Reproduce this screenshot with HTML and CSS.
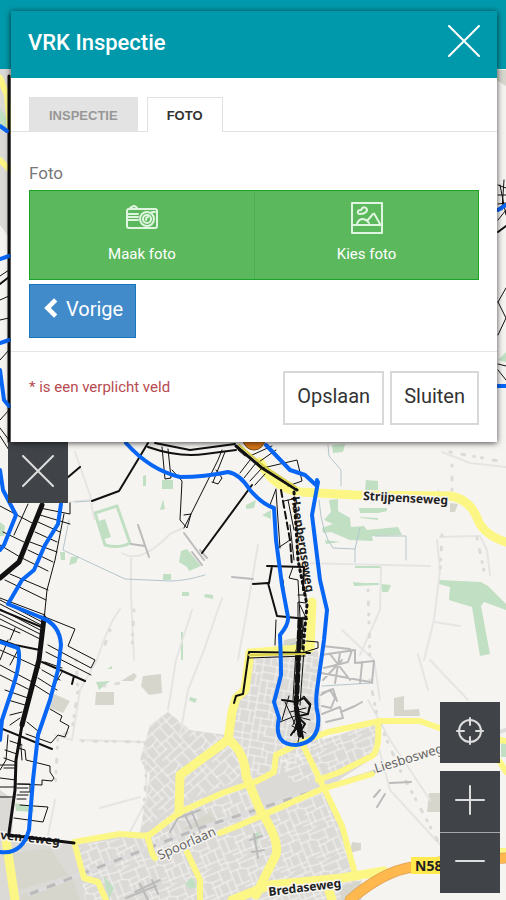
FILE: index.html
```html
<!DOCTYPE html>
<html lang="nl">
<head>
<meta charset="utf-8">
<meta name="viewport" content="width=device-width, initial-scale=1">
<title>VRK Inspectie</title>
<link rel="stylesheet" href="styles.css">
</head>
<body>
<div class="page">
  <svg class="map" viewBox="0 0 506 900" preserveAspectRatio="xMidYMin slice" aria-hidden="true">
    <defs>
      <pattern id="streets-a" width="38" height="34" patternUnits="userSpaceOnUse" patternTransform="rotate(-22)">
        <path d="M0 1Q12 4 19 1T38 1M0 11H12L18 14H28M12 6H38M16 20L38 18M0 26H16M10 30H38M1 0V34M12 0V11M8 11V26M18 14V34M28 6V18M23 20V30M32 18V34M33 0V6"/>
      </pattern>
      <pattern id="streets-b" width="34" height="38" patternUnits="userSpaceOnUse" patternTransform="rotate(10)">
        <path d="M0 1H34M0 8H15L20 10H34M0 16H20M8 23H34M0 30H14M14 33H34M1 0V38M15 1V16M8 16V38M20 10V23M27 1V10M26 23V38M30 10V23M14 23V33"/>
      </pattern>
      <pattern id="streets-c" width="36" height="34" patternUnits="userSpaceOnUse" patternTransform="rotate(-42)">
        <path d="M0 1H36M0 8Q10 12 18 8M12 15H36M0 22H20M8 28H36M1 0V34M18 0V22M10 10V22M28 1V15M24 15V28M31 15V34M13 28V34"/>
      </pattern>
    </defs>

    <!-- built-up areas -->
    <g class="urban">
      <path d="M0 838L76 845L98 900H0Z"/>
      <path d="M0 790L14 800L12 840L0 838Z"/>
      <path d="M0 69H11V240L0 225Z"/>
      <path d="M252 656L318 650L322 740L380 722L378 755L345 776L325 790L356 870L362 900H85L75 845L140 832L150 775L140 760L150 725L168 712L190 730L226 735L236 700Z"/>
    </g>
    <path class="fill-a" d="M75 845L145 835L180 805L250 780L262 810L330 790L356 870L362 900H85Z"/>
    <path class="fill-b" d="M252 656L318 650L322 740L290 770L245 785L228 735L240 700Z"/>
    <path class="fill-c" d="M140 832L150 775L140 760L150 725L168 712L226 738L248 778L180 802Z"/>
    <path class="fill-a" d="M322 732L378 724L376 755L322 780L290 782L280 760Z"/>
    <g class="soft">
      <path d="M54 694L70 701L63 713L50 708ZM96 692H114V705H95ZM121 681L134 673L137 676L133 681L125 681ZM143 676L161 674L162 693L149 695L141 686Z"/>
      <path d="M394 698L404 696V710L419 709L420 716H394ZM429 793H440V812H427ZM352 842L361 843V850L350 853ZM338 888L362 880L356 900H342ZM182 829L210 812L218 822L190 830Z"/>
      <path d="M2 855L50 848L68 875L20 890ZM20 895L72 877L80 900H20Z"/>
      <path d="M496 70H506V86L496 80ZM450 503L458 504L455 512H450ZM284 640L301 637L300 648H283Z"/>
    </g>

    <!-- greenery -->
    <g class="green">
      <path d="M99 521L105 519L111 537L104 539ZM71 557L79 556L76 563L69 565ZM60 552H65V560H61ZM181 551L187 549L201 566L189 571L187 567L179 562ZM163 574H171V580H163ZM182 592H189V596H182ZM205 594L213 595V599L204 597ZM162 480H173V489H162ZM143 476L146 475V486H143Z"/>
      <path d="M329 500L338 499L338 511L350 518L351 527L364 526L367 530L398 527L402 535L372 536L373 541L350 540L331 532L323 533L322 528L333 524L324 520L331 512ZM366 480L378 481V490H365ZM359 508L387 508V511L378 513H360ZM360 517L378 518V520L361 518ZM332 445L345 444L343 452L333 453ZM325 540L340 542L326 544Z"/>
      <path d="M353 582L364 583L379 583V585L354 586ZM381 584L391 585L388 592H382ZM355 566H380V568H355ZM439 580L481 582L488 586L506 604L506 610L484 602L481 606L490 654L480 656L472 607L449 600L450 587L439 584Z"/>
      <path d="M96 682L110 681L99 690ZM107 669L112 666V669ZM501 743H506V757H501ZM190 697L197 699L195 703L189 700ZM185 884L192 877L197 887L190 889ZM103 875L114 888L109 899ZM252 834L260 832L258 842ZM0 522L5 526L4 536H0ZM246 505L256 500L254 508L246 509ZM264 514L271 510V519L262 515ZM163 499L165 509L160 510ZM375 565L377 567H374ZM15 803L33 807L34 812L16 811ZM0 108L8 120V130H0ZM498 360L506 352V362Z"/>
      <path d="M181 632H183V660H181Z"/>
    </g>
    <path class="park" d="M95 513L117 506L130 543Q119 549 105 545Z"/>

    <!-- minor roads and water -->
    <g class="lane">
      <path d="M75 452L90 495L94 519M70 502L91 500M122 553Q140 565 170 534L183 528M131 558V595M131 595L134 660M120 609Q108 625 97 660L80 690L72 740L55 735M222 598L204 650L188 690L180 735M258 545L247 610L238 660M300 563L430 566M438 490L445 500M381 567L380 610L360 655M437 540L440 570L434 620L424 660M440 537L478 536M434 622L460 626M442 452L470 463L506 467M480 536L487 550L490 575M430 660L468 700M80 740L145 742L147 800L130 832M418 654L428 690M368 700L390 740L430 800M378 745L390 790L445 850M342 630L374 660L380 700M192 610L176 660L168 710M100 808L140 797M55 800L48 835"/>
    </g>
    <g class="dots">
      <path d="M76 660L78 690L72 730L58 738L55 790M82 741L145 742L146 780L143 815M368 590L370 660M442 535L440 575M477 538L486 580M370 680L378 720L400 770L440 845M104 686L120 683M134 610L132 650M110 630L103 650M450 452L504 462M452 465L452 490"/>
    </g>
    <g class="water">
      <path d="M69 520L63 550L125 579L170 581Q185 581 205 575M328 445L329 456L341 470V486M319 500Q322 535 333 548L355 549L360 528M375 536H406V560M355 549V562M75 502L90 501M322 686L372 683M290 645L300 641M382 873L400 868"/>
    </g>
    <g class="grey">
      <path d="M138 525L149 557M131 544L145 546M184 533L204 560M192 552L202 565M232 577L253 579M200 550L207 558M390 783L411 782M374 797L380 790M377 807L385 794"/>
      <path d="M321 655L355 650V663L374 661L372 683M324 668L348 662L352 650M323 680L342 660M330 654L350 680M321 673L370 682M362 664L360 683M340 653L335 683M321 695L330 690L335 698L331 708L322 706M322 714L340 707L343 718L326 722M322 693L333 689L337 701M341 712L355 706L362 702M322 646L350 649"/>
      <path d="M170 832L178 818L200 810M174 838L196 830M185 815L196 838M192 812L200 832M250 840L262 836M252 852L264 850M254 834L258 858M135 892L160 880M126 898L156 886M140 884L148 900M152 880L158 894"/>
    </g>
    <path class="rail-base" d="M30 894L200 828L320 789L506 730"/>
    <path class="rail" d="M30 894L200 828L320 789L506 730"/>

    <!-- main roads -->
    <g class="road">
      <path class="wide" d="M260 462Q274 488 300 492L355 495L450 496Q470 499 478 520Q484 535 506 542"/>
      <path class="wide" d="M312 602L310 648L250 653L245 690L236 698L232 712L228 740"/>
      <path class="wide" d="M229 739L180 775L179 812"/>
      <path d="M74 842L120 834L148 836L180 812L225 792L255 782L274 772L276 755L300 743L328 732L380 721L420 721L445 730L506 741"/>
      <path class="wide" d="M228 739Q245 752 246 776L260 810Q280 840 276 855Q268 870 256 895"/>
      <path d="M378 722Q380 750 372 756L340 772L318 780M303 745L325 790L342 826L354 870"/>
      <path d="M220 833L240 825L322 789L372 774"/>
      <path d="M147 835L152 853L155 858M187 852L200 880V900"/>
      <path d="M75 845L84 878L98 882L106 900"/>
      <path class="wide" d="M6 840L15 900M232 900L270 885L342 878L384 871M326 882L332 900"/>
      <path d="M500 762L506 772M497 851H506M0 78L7 95L10 130M0 160L10 170"/>
    </g>
    <path class="highway-edge" d="M350 900Q382 872 412 867L440 862L506 858"/>
    <path class="highway" d="M350 900Q382 872 412 867L440 862L506 858"/>

    <g class="map-labels">
      <text x="363" y="500" transform="rotate(3 363 500)" class="strong">Strijpenseweg</text>
      <text x="376" y="773" transform="rotate(-17 376 773)">Liesbosweg</text>
      <text x="160" y="860" transform="rotate(-24 160 860)">Spoorlaan</text>
      <text x="269" y="896" transform="rotate(-7 269 896)" class="strong">Bredaseweg</text>
      <text x="0" y="839" transform="rotate(6 0 839)" class="strong">venseweg</text>
      <text x="291" y="497" transform="rotate(81 291 497)" class="strong">Haenbergseweg</text>
    </g>

    <!-- parcel lines -->
    <g class="parcel">
      <path class="mid" d="M67 478L80 467M92 501L119 491L148 443M202 553L252 485M148 447Q180 458 205 454L236 450M155 443L190 450L235 444"/>
      <path d="M162 447L165 479L171 478L168 449M172 470L182 481L180 520L187 528L191 514L184 515M184 528L218 460L222 450M213 482L225 452M212 482L218 484L222 478L216 470M240 473L250 460M244 478L256 463M250 481L262 468M255 485L265 474M238 450L245 456M250 456L272 446M256 464L276 450M263 468L297 460L302 481L288 486M276 489L270 505M276 490L278 520L280 548M288 500L294 530M278 548L290 540M290 525L294 560M284 501L293 499M293 567L289 578L298 580L300 617M275 645L276 620M300 605L306 618L298 618"/>
      <path class="mid" d="M267 566L304 567M253 584L268 583L277 616L307 619M272 566L269 583M304 567L303 590"/>
      <path d="M0 506L34 524M28 504L14 535M3 532L24 542M0 545L20 557M40 515L70 524M70 503V514L40 508M64 514L55 560L47 590L40 660M38 522L60 532M35 532L57 542M30 542L57 552M28 550L53 562M20 557L48 571M10 574L48 590M5 580L46 600M0 598L45 615M45 617L75 629L68 646L95 660L91 668L48 645M46 652L91 675M0 600L42 622M0 604L43 626M0 609L42 631M0 614L42 635M0 619L42 640M0 625L20 633M8 640L0 660M0 650L40 668M15 628L10 640M0 642L15 647M18 650L10 665"/>
      <path d="M0 665L34 683M0 675L30 690M8 700L25 705M5 690L28 698M45 662L62 668M42 670L60 680M38 678L57 690M33 684L52 696M62 672L55 684M50 709L62 716L60 721L69 726L65 737L58 735L51 743L26 734M27 722L38 731M18 748L25 750L26 760L50 766V772L54 778L52 781L42 780V785L18 784M20 735L22 760M8 735L6 760L0 770M10 741L22 745M5 750L17 754M4 758L15 762M0 765H15M4 768H14M0 778L16 780M0 787H16M0 797H15M16 784H30V792H20M17 788H28M17 795H28M17 799H26M20 805L48 807L43 822L14 818M10 715L22 712M10 725L20 718"/>
      <path class="mid" d="M0 728L52 749M42 662L85 681M74 676L72 684M0 610L44 628M0 640L15 645L40 650"/>
      <path class="fat" d="M42 505L19 562L0 578M44 618L39 660L22 725"/>
      <path class="heavy" d="M22 725L16 760L15 790L9 833M8 835L74 843"/>
      <path class="mid" d="M234 703L236 696L243 694L249 652L310 653"/>
      <path d="M249 658L305 656M305 652L318 648V642L306 641M283 580L284 590M298 595L306 595L306 603L298 602V617M303 617L302 648M304 625L299 650M296 650L293 700M304 650L300 705M289 696L282 720M284 700L297 702L304 696L311 704L308 714L298 711L293 725M285 702L300 735M280 722L295 716L310 720M290 712L306 708M294 732L302 724L298 742M292 726L306 733"/>
      <path class="mid" d="M282 700L296 702L299 718L305 724L300 732M297 702L304 698L310 705L308 714L299 716M291 735L300 722L303 738M298 720L294 732"/>
      <path class="fat dashed" d="M300 620L297 690L296 705L300 735"/>
      <path class="heavy" d="M236 446L262 468L297 490"/>
      <path class="heavy tight" d="M294 492L298 560L307 605L303 650"/>
      <path class="dashed mid" d="M281 490L290 540L292 566"/>
      <path class="heavy" d="M9 76V442"/>
      <path d="M0 300L9 296M0 320L9 318M0 276L9 270M0 360L9 350M0 420L9 410M0 428L9 440M0 436L9 450M498 185L506 188M498 195H506M498 204L506 203M498 220L506 210M498 302L506 288M498 302L506 318M498 335L506 318M498 364L506 366M498 370L506 380M500 185L506 215M504 180L502 210"/>
      <path class="mid" d="M0 284L9 277M498 232L506 226"/>
    </g>
    <path class="yellow-top" d="M239 445L264 466L296 487M249 655L305 654"/>

    <!-- water board boundaries -->
    <g class="boundary">
      <path d="M126 443Q150 470 180 477Q205 477 228 472Q240 474 250 490Q262 504 274 508L276 540L282 585L288 617Q289 624 280 635Q281 660 281 675Q276 695 274 702L279 718Q273 745 296 745Q321 742 318 715Q315 705 317 690L324 640L327 610L320 580L312 515L318 482M266 445L290 470L305 475L317 486V480"/>
      <path d="M0 470L3 490L16 515L4 545L0 550M61 504L58 524L45 545L34 570L22 580L8 604L40 617Q60 624 61 645L58 670L50 700L38 735L33 780L29 830Q22 855 0 852M0 642L18 648Q22 660 12 690L2 720L0 740M0 126L7 131M0 259L9 256M0 343L9 340M0 370L4 400L9 406M498 210L506 205M498 386H506"/>
    </g>
    <circle class="marker" cx="254" cy="439" r="11"/>

    <path class="shield" d="M411 857H450V874H411Z"/>
    <text class="shield-text" x="415" y="871">N58</text>
  </svg>

  <div class="topbar"></div>

  <section class="dialog" role="dialog" aria-labelledby="dialog-title">
    <header class="dialog-header">
      <h1 id="dialog-title">VRK Inspectie</h1>
      <button class="icon-button" type="button" aria-label="Sluiten">
        <svg class="cross" viewBox="0 0 32 32"><path d="M1 1L31 31M31 1L1 31"/></svg>
      </button>
    </header>

    <div class="tabs" role="tablist">
      <button class="tab" type="button" role="tab" aria-selected="false">INSPECTIE</button>
      <button class="tab tab-active" type="button" role="tab" aria-selected="true">FOTO</button>
    </div>

    <div class="dialog-body">
      <p class="field-label" id="photo-label">Foto</p>
      <div class="photo-actions" role="group" aria-labelledby="photo-label">
        <button class="photo-button" type="button">
          <svg viewBox="0 0 32 32">
            <path d="M3 7H29Q31 7 31 9V24Q31 26 29 26H3Q1 26 1 24V9Q1 7 3 7ZM4 7Q4 5 6 5Q8 3 10 5Q11 5 11 7M2 12H12M2 15H12M2 18H12M26 10H29"/>
            <circle cx="21" cy="17" r="7"/><circle cx="21" cy="17" r="4"/><path d="M20 18Q20 15 22 15"/>
          </svg>
          <span>Maak foto</span>
        </button>
        <button class="photo-button" type="button">
          <svg viewBox="0 0 32 32">
            <path d="M1 1H31V31H1ZM1 23H31M6 22Q7 18 11 17Q15 17 18 21M16 19L22 12Q23 11 24 13L29 22M9 12Q6 12 7 9Q8 8 10 8Q12 4 15 6Q17 8 15 10Q13 12 9 12Z"/>
          </svg>
          <span>Kies foto</span>
        </button>
      </div>
      <button class="previous" type="button">
        <svg viewBox="0 0 12 18"><path d="M10 2L3 9L10 16"/></svg>
        <span>Vorige</span>
      </button>
    </div>

    <footer class="dialog-footer">
      <p class="required-note">* is een verplicht veld</p>
      <div class="footer-actions">
        <button class="plain" type="button">Opslaan</button>
        <button class="plain" type="button">Sluiten</button>
      </div>
    </footer>
  </section>

  <button class="map-button map-close" type="button" aria-label="Menu sluiten">
    <svg class="cross" viewBox="0 0 32 32"><path d="M1 1L31 31M31 1L1 31"/></svg>
  </button>

  <div class="map-controls">
    <button class="map-button" type="button" aria-label="Mijn locatie">
      <svg viewBox="0 0 32 32"><circle cx="16" cy="16" r="11"/><path d="M16 3V10M16 22V29M3 16H10M22 16H29"/></svg>
    </button>
    <div class="zoom">
      <button class="map-button" type="button" aria-label="Inzoomen">
        <svg viewBox="0 0 32 32"><path d="M16 2V30M2 16H30"/></svg>
      </button>
      <button class="map-button" type="button" aria-label="Uitzoomen">
        <svg viewBox="0 0 32 32"><path d="M2 16H30"/></svg>
      </button>
    </div>
  </div>
</div>
</body>
</html>
```
FILE: styles.css
```css
* {
  box-sizing: border-box;
}

body {
  margin: 0;
  font-family: Roboto, "Liberation Sans", sans-serif;
  color: #333;
}

h1,
p {
  margin: 0;
}

button {
  font: inherit;
  cursor: pointer;
  border-radius: 0;
}

svg {
  display: block;
  fill: none;
  stroke-linecap: round;
  stroke-linejoin: round;
}

.page {
  position: relative;
  display: flex;
  flex-direction: column;
  min-height: 100vh;
  overflow: hidden;
  background: #f6f4f1;
}

.map {
  position: absolute;
  inset: 0;
  width: 100%;
  height: 100%;
}

.topbar {
  position: absolute;
  inset: 0 0 auto;
  height: 69px;
  background: #0099ab;
}

/* Dialog */

.dialog {
  position: relative;
  z-index: 1;
  margin: 11px 9px 0 11px;
  background: #fff;
  box-shadow: 0 1px 6px rgba(0, 0, 0, 0.7);
}

.dialog-header {
  display: flex;
  align-items: center;
  justify-content: space-between;
  height: 67px;
  padding: 0 17px 4px;
  background: #0099ab;
  color: #fff;
}

.dialog-header h1 {
  font-size: 22px;
  font-weight: 500;
  line-height: 28px;
}

.icon-button {
  padding: 0 0 4px;
  border: 0;
  background: none;
}

.cross {
  width: 32px;
  height: 32px;
  stroke: #fff;
  stroke-width: 2;
}

.tabs {
  display: flex;
  gap: 9px;
  margin-top: 19px;
  padding: 0 18px;
  box-shadow: inset 0 -1px #e1e1e1;
}

.tab {
  height: 35px;
  padding: 0 19px;
  border: 1px solid #e1e1e1;
  border-bottom: 0;
  background: #e3e3e3;
  color: #979797;
  font-family: "Liberation Sans", sans-serif;
  font-size: 13px;
  font-weight: 700;
}

.tab-active {
  background: #fff;
  color: #333;
}

.dialog-body {
  padding: 31px 18px 13px;
}

.field-label {
  font-size: 17px;
  line-height: 20px;
  color: #777;
}

.photo-actions {
  display: grid;
  grid-template-columns: 1fr 1fr;
  margin-top: 7px;
  border: 1px solid #1ba327;
}

.photo-button {
  display: flex;
  flex-direction: column;
  align-items: center;
  gap: 10px;
  height: 88px;
  padding: 11px 0 0;
  border: 0;
  background: #5cb85c;
  color: #fff;
  font-size: 15px;
  line-height: 20px;
}

.photo-button + .photo-button {
  border-left: 1px solid #4cae4c;
}

.photo-button svg {
  width: 32px;
  height: 32px;
  stroke: #dff5df;
  stroke-width: 2;
}

.previous {
  display: flex;
  gap: 8px;
  height: 54px;
  margin-top: 4px;
  padding: 12px 12px 0 14px;
  border: 1px solid #1976bd;
  background: #428bca;
  color: #fff;
  font-size: 20px;
  line-height: 24px;
}

.previous svg {
  width: 14px;
  height: 22px;
  stroke: #fff;
  stroke-width: 4;
  stroke-linecap: butt;
  stroke-linejoin: miter;
}

.dialog-footer {
  display: flex;
  justify-content: space-between;
  padding: 19px 18px 17px;
  border-top: 1px solid #e5e5e5;
}

.required-note {
  padding-top: 6px;
  color: #b64a50;
  font-size: 15px;
  line-height: 20px;
}

.footer-actions {
  display: flex;
  gap: 6px;
}

.plain {
  height: 54px;
  padding: 0 12px 4px;
  border: 2px solid #d8d8d8;
  background: #fff;
  color: #333;
  font-size: 20px;
}

/* Map buttons */

.map-button {
  position: relative;
  display: grid;
  place-items: center;
  width: 60px;
  height: 61px;
  padding: 0 0 4px;
  border: 0;
  background: #404448;
}

.map-button svg {
  width: 32px;
  height: 32px;
  stroke: #ddd;
  stroke-width: 2;
}

.map-close {
  margin-left: 8px;
}

.map-controls {
  display: grid;
  gap: 8px;
  margin: auto 6px 7px auto;
}

.zoom .map-button + .map-button {
  border-top: 1px solid #a5a7a9;
}

/* Map layers */

pattern path {
  stroke: #f4f4f3;
  stroke-width: 1;
}

.urban {
  fill: #dcdad6;
}

.fill-a {
  fill: url(#streets-a);
}

.fill-b {
  fill: url(#streets-b);
}

.fill-c {
  fill: url(#streets-c);
}

.soft {
  fill: #d6d6cd;
}

.green {
  fill: #c1dfc2;
}

.park {
  stroke: #c1dfc2;
  stroke-width: 3;
}

.lane {
  stroke: #e6e5e4;
  stroke-width: 2;
}

.dots {
  stroke: #dbdbd8;
  stroke-width: 3;
  stroke-dasharray: 1 11 3 9 1 7;
}

.water {
  stroke: #b4c6cc;
  stroke-width: 1;
}

.grey {
  stroke: #bbb;
  stroke-width: 2;
}

.rail-base {
  stroke: #ddd;
  stroke-width: 4;
}

.rail {
  stroke: #bbb;
  stroke-width: 3;
  stroke-linecap: butt;
  stroke-dasharray: 9 9;
}

.road {
  stroke: #fcf785;
  stroke-width: 6;
}

.road .wide {
  stroke-width: 9;
}

.highway-edge {
  stroke: #e3a85b;
  stroke-width: 11;
}

.highway {
  stroke: #ffb84d;
  stroke-width: 9;
}

.parcel {
  stroke: #111;
  stroke-width: 1;
}

.parcel .mid {
  stroke-width: 2;
}

.parcel .heavy {
  stroke-width: 3;
}

.parcel .fat {
  stroke-width: 5;
}

.parcel .dashed {
  stroke-dasharray: 7 4;
}

.parcel .tight {
  stroke-dasharray: 2 4;
}

.yellow-top {
  stroke: #d8d048;
  stroke-width: 2;
}

.boundary {
  stroke: #0866f5;
  stroke-width: 4;
}

.marker {
  fill: #d97516;
  stroke: #73501c;
}

.map-labels {
  font-family: "Noto Sans", sans-serif;
  font-size: 13px;
  fill: #666;
  stroke: #f7f5f0;
  stroke-width: 3;
  paint-order: stroke;
}

.map-labels .strong {
  font-size: 12px;
  font-weight: 700;
  fill: #222;
}

.shield {
  fill: #ffe94d;
}

.shield-text {
  font-family: "Noto Sans", sans-serif;
  font-size: 14px;
  font-weight: 700;
  fill: #222;
}
```
